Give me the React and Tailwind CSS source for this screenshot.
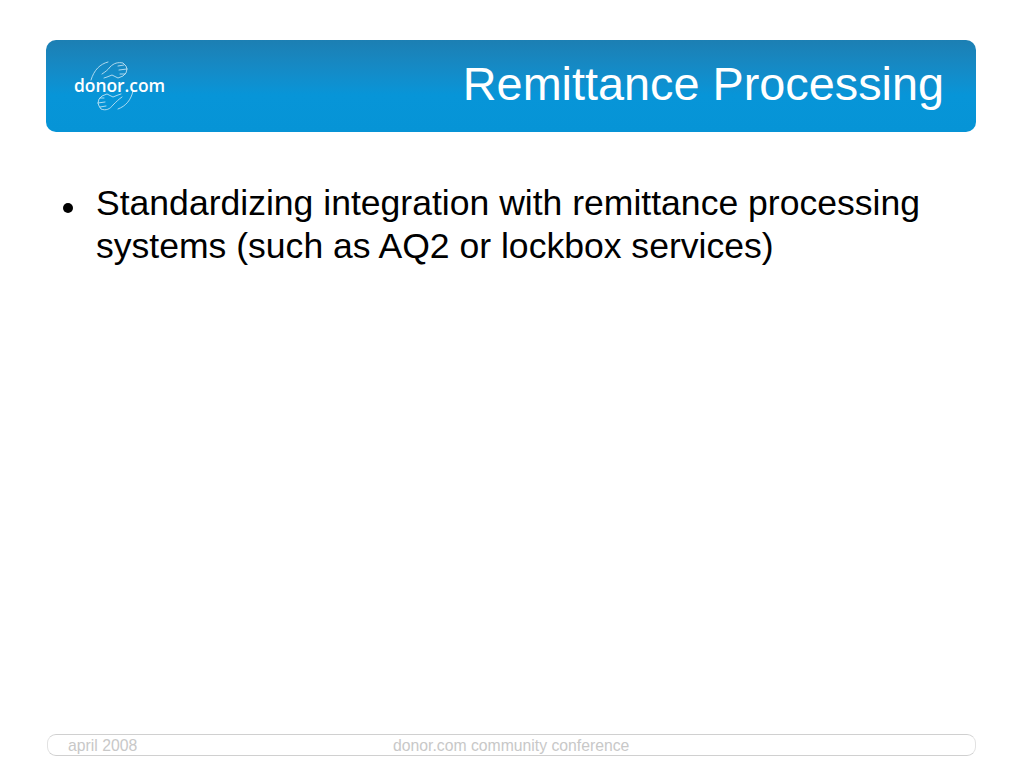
export default function App() {
  return (
    <div className="w-[1024px] h-[768px] bg-white flex flex-col overflow-hidden font-['Liberation_Sans',Arial,sans-serif]">
      {/* cabecera */}
      <header className="mt-10 mx-[48px] ml-[46px] h-[92px] rounded-[10px] bg-gradient-to-b from-[#1c7fb3] via-[#0795d8] via-60% to-[#0694d6] flex items-start justify-between pl-[28px] pr-[32px]">
        <div className="relative w-[96px] h-[52px] mt-[20px]">
          <svg viewBox="0 0 96 52" className="absolute inset-0 w-full h-full" fill="none" stroke="#d6ecf7" strokeWidth="0.8" strokeLinecap="round" strokeLinejoin="round">
            <path d="M17 20 C20 10 26 4 34 2" />
            <path d="M59 31 C57 40 52 46 44 49" />
            <path d="M28 14 C31 12 34 10 36 7 C40 3 44 2 49 3 L52 6 L53 9 L52 13 L49 16 L44 18 L38 15 L33 17 L30 18" />
            <path d="M44 6 L50 5 M45 10 L53 9 M46 14 L51 14" />
            <path d="M48 37 C45 39 42 42 39 45 C36 49 32 51 27 49 L25 46 L24 43 L25 39 L28 36 L33 34 L39 37 L44 35 L47 34" />
            <path d="M32 46 L26 47 M31 42 L24 43 M30 38 L26 38" />
          </svg>
          <span className="absolute left-[0px] top-[14px] text-[17.4px] leading-[22px] font-semibold text-white font-['Open_Sans',sans-serif]">
            donor.com
          </span>
        </div>
        <h1 className="text-[46.8px] leading-[55px] mt-[17px] text-white">Remittance Processing</h1>
      </header>

      {/* contenido */}
      <main className="flex-1 flex items-start pl-[63px] pr-[90px] pt-[50px] text-[35.55px] leading-[43px] text-black">
        <span className="w-[10px] h-[10px] mt-[21px] mr-[23px] shrink-0 rounded-full bg-black" />
        <p className="w-[860px]">
          Standardizing integration with remittance processing systems (such as AQ2 or lockbox services)
        </p>
      </main>

      {/* pie */}
      <footer className="mb-[12px] ml-[47px] mr-[48px] h-[22px] rounded-[9px] border border-[#d0d0d0] border-x-[#e2e2e2] flex items-center pt-[1px] text-[15.75px] text-[#c8c8c8]">
        <span className="ml-[20px] w-[325px]">april 2008</span>
        <span>donor.com community conference</span>
      </footer>
    </div>
  );
}
